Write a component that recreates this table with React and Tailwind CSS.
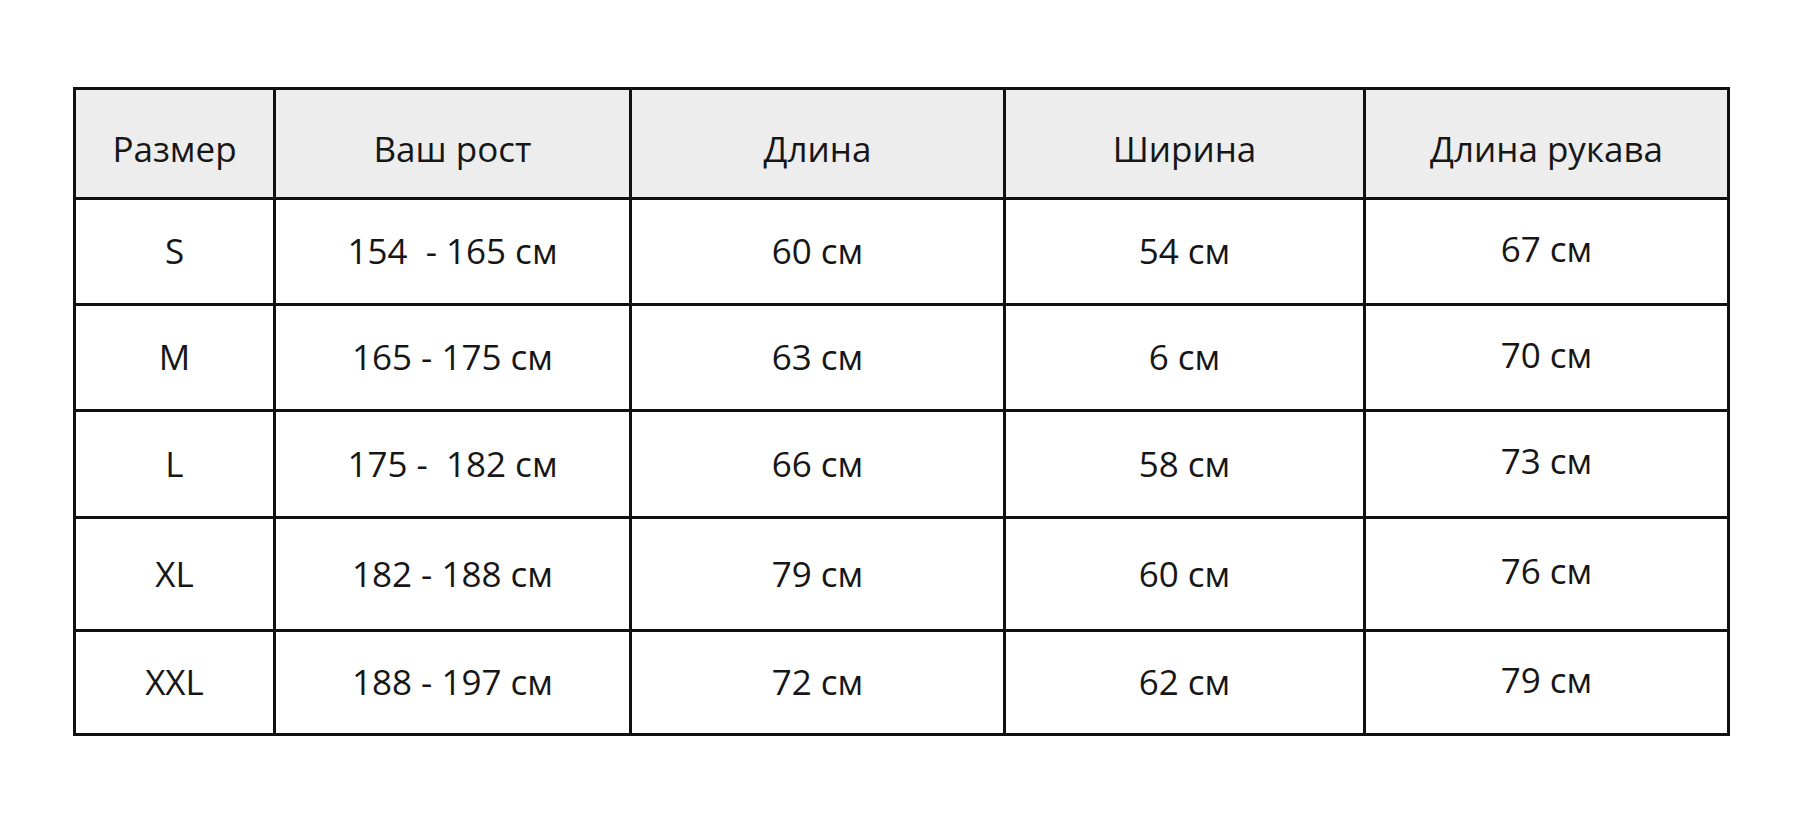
import React from "react";

const header = ["Размер", "Ваш рост", "Длина", "Ширина", "Длина рукава"];
const rows = [
  { h: "h-[103px]", cells: ["S", "154  - 165 см", "60 см", "54 см", "67 см"] },
  { h: "h-[103px]", cells: ["M", "165 - 175 см", "63 см", "6 см", "70 см"] },
  { h: "h-[104px]", cells: ["L", "175 -  182 см", "66 см", "58 см", "73 см"] },
  { h: "h-[110px]", cells: ["XL", "182 - 188 см", "79 см", "60 см", "76 см"] },
  { h: "h-[101px]", cells: ["XXL", "188 - 197 см", "72 см", "62 см", "79 см"] },
];

export default function App() {
  return (
    <div className="w-[1802px] h-[822px] bg-white pt-[87px] pl-[73px]" style={{ fontFamily: '"Open Sans", "Noto Sans", sans-serif' }}>
      <div className="w-[1657px] border-[3px] border-[#111] bg-[#111] grid grid-cols-[197px_353px_371px_357px_361px] gap-[3px] text-[#161616] text-[35px]">
        {header.map((t) => (
          <div key={t} className="h-[107px] pt-3 bg-[#ededed] flex items-center justify-center whitespace-pre">
            {t}
          </div>
        ))}
        {rows.map((r) =>
          r.cells.map((c, i) => (
            <div
              key={r.cells[0] + i}
              className={`${r.h} bg-white flex items-center justify-center whitespace-pre ${i === 4 ? "pb-[5px]" : ""}`}
            >
              {c}
            </div>
          ))
        )}
      </div>
    </div>
  );
}
